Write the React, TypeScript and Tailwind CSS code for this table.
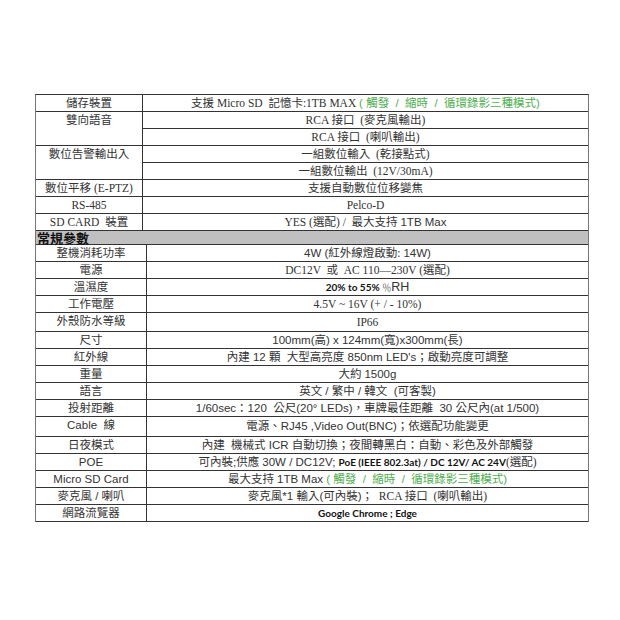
import type { ReactNode } from "react";

const serif = "font-['Liberation_Serif','Noto_Sans_CJK_TC',serif]";
const sans = "font-['Liberation_Sans','Noto_Sans_CJK_TC',sans-serif]";

// small inline helpers for the mixed-font cells
const Sf = ({ children }: { children: ReactNode }) => <span className={serif}>{children}</span>;
const Sn = ({ children }: { children: ReactNode }) => <span className={sans}>{children}</span>;
const Bd = ({ children }: { children: ReactNode }) => (
  <span className="font-['Lato','Noto_Sans_CJK_TC',sans-serif] text-[10px] font-bold text-[#111]">{children}</span>
);
const Green = () => (
  <span className={`${sans} text-[#4fae4f]`}>( 觸發 &nbsp;/ &nbsp;縮時 &nbsp;/ &nbsp;循環錄影三種模式)</span>
);

type Row = { label: ReactNode; values: ReactNode[]; h?: string };

const storage: Row[] = [
  {
    label: <Sf>儲存裝置</Sf>,
    values: [
      <>
        <Sf>支援 Micro SD &nbsp;記憶卡:1TB MAX&nbsp;</Sf>
        <Green />
      </>,
    ],
  },
  { label: <Sf>雙向語音</Sf>, values: [<Sf>RCA 接口 &nbsp;(麥克風輸出)</Sf>, <Sf>RCA 接口 &nbsp;(喇叭輸出)</Sf>] },
  { label: <Sf>數位告警輸出入</Sf>, values: [<Sf>一組數位輸入 &nbsp;(乾接點式)</Sf>, <Sf>一組數位輸出 &nbsp;(12V/30mA)</Sf>] },
  { label: <Sf>數位平移 (E-PTZ)</Sf>, values: [<Sf>支援自動數位位移變焦</Sf>] },
  { label: <Sf>RS-485</Sf>, values: [<Sf>Pelco-D</Sf>] },
  {
    label: <Sf>SD CARD &nbsp;裝置</Sf>,
    values: [
      <>
        <Sf>YES (選配) / &nbsp;最大支持&nbsp;</Sf>
        <Sn>1TB Max</Sn>
      </>,
    ],
  },
];

const general: Row[] = [
  {
    label: <Sf>整機消耗功率</Sf>,
    values: [
      <>
        <Sn>4W (</Sn>
        <Sf>紅外線燈啟動:&nbsp;</Sf>
        <Sn>14W)</Sn>
      </>,
    ],
  },
  { label: <Sf>電源</Sf>, values: [<Sf>DC12V &nbsp;或 &nbsp;AC 110—230V (選配)</Sf>] },
  {
    label: <Sf>溫濕度</Sf>,
    values: [
      <>
        <Bd>20% to 55%</Bd>
        <span className={`${sans} text-[9px] text-[#666]`}>&nbsp;％</span>
        <span className={`${sans} text-[12.5px]`}>RH</span>
      </>,
    ],
  },
  { label: <Sf>工作電壓</Sf>, values: [<Sf>4.5V ~ 16V (+ / - 10%)</Sf>] },
  { label: <Sf>外殼防水等級</Sf>, values: [<Sf>IP66</Sf>], h: "h-[18px]" },
  { label: <Sf>尺寸</Sf>, values: [<Sn>100mm(高) x 124mm(寬)x300mm(長)</Sn>] },
  { label: <Sf>紅外線</Sf>, values: [<Sn>內建 12 顆 &nbsp;大型高亮度 850nm LED's；啟動亮度可調整</Sn>] },
  {
    label: <Sf>重量</Sf>,
    values: [
      <>
        <Sf>大約&nbsp;</Sf>
        <Sn>1500g</Sn>
      </>,
    ],
  },
  { label: <Sf>語言</Sf>, values: [<Sn>英文 / 繁中 / 韓文 &nbsp;(可客製)</Sn>] },
  {
    label: <Sf>投射距離</Sf>,
    values: [<Sn>1/60sec：120 &nbsp;公尺(20° LEDs)，車牌最佳距離 &nbsp;30 公尺內(at 1/500)</Sn>],
  },
  { label: <Sn>Cable &nbsp;線</Sn>, values: [<Sn>電源、RJ45 ,Video Out(BNC)；依選配功能變更</Sn>], h: "h-[19px]" },
  { label: <Sf>日夜模式</Sf>, values: [<Sn>內建 &nbsp;機械式 ICR 自動切換；夜間轉黑白：自動、彩色及外部觸發</Sn>] },
  {
    label: <Sn>POE</Sn>,
    values: [
      <>
        <Sn>可內裝;供應 30W / DC12V;&nbsp;</Sn>
        <Bd>PoE (IEEE 802.3at) / DC 12V/ AC 24V</Bd>
        <Sf>(選配)</Sf>
      </>,
    ],
  },
  {
    label: <Sn>Micro SD Card</Sn>,
    values: [
      <>
        <Sn>最大支持 1TB Max&nbsp;</Sn>
        <Green />
      </>,
    ],
  },
  {
    label: <Sn>麥克風 / 喇叭</Sn>,
    values: [
      <>
        <Sn>麥克風*1 輸入(可內裝)；</Sn>
        <Sf>&nbsp; RCA 接口 &nbsp;(喇叭輸出)</Sf>
      </>,
    ],
  },
  { label: <Sf>網路流覽器</Sf>, values: [<Bd>Google Chrome ; Edge</Bd>] },
];

function Section({ rows, labelWidth }: { rows: Row[]; labelWidth: string }) {
  return (
    <div className="flex flex-col">
      {rows.map((row, i) => (
        <div key={i} className="flex border-b border-[#333]">
          <div className={`${labelWidth} shrink-0 border-r border-[#333] text-center leading-[16px] whitespace-nowrap`}>
            {row.label}
          </div>
          <div className="flex min-w-0 flex-1 flex-col">
            {row.values.map((v, j) => (
              <div
                key={j}
                className={`${row.h ?? "h-[16px]"} flex items-center justify-center whitespace-nowrap ${
                  j < row.values.length - 1 ? "h-[17px] border-b border-[#333]" : ""
                }`}
              >
                <span>{v}</span>
              </div>
            ))}
          </div>
        </div>
      ))}
    </div>
  );
}

export default function App() {
  return (
    <div className="min-h-[620px] w-[620px] bg-white pt-[94px] text-[11.5px] text-[#333]">
      <div className="ml-[35px] w-[554px] border-x border-t border-x-[#777] border-t-[#333]">
        <Section rows={storage} labelWidth="w-[107px]" />
        <div className="flex h-[14px] items-center border-b border-[#333] bg-[#c0c0c0] pl-[1px] font-['Noto_Sans_CJK_TC',sans-serif] text-[13px] font-bold leading-none text-[#111]">
          常規參數
        </div>
        <Section rows={general} labelWidth="w-[111px]" />
      </div>
    </div>
  );
}
